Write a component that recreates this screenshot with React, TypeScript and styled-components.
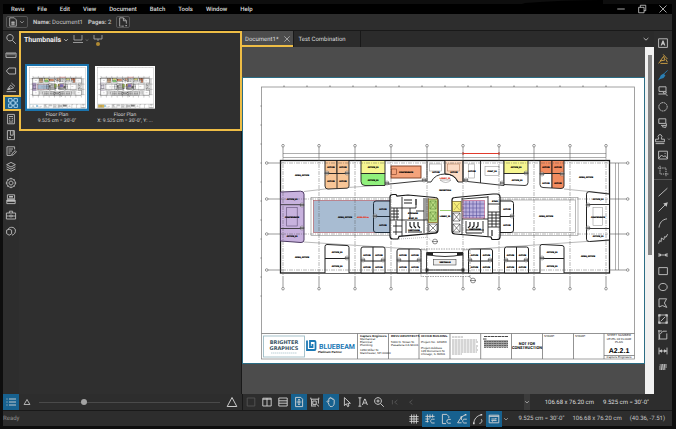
import { createContext, useContext, useState } from "react";
import styled, { createGlobalStyle, css } from "styled-components";

const colors = {
  frame: "#0e0e0e",
  bar: "#2d2d2d",
  canvas: "#4c4c4c",
  line: "#191919",
  text: "#dcdcdc",
  muted: "#8d8d8d",
  blue: "#17618f",
  yellow: "#eebd45",
};

interface GlyphProps {
  d: string;
  fill?: string;
  color?: string;
  size?: number;
  dash?: string;
}

const Glyph: React.FC<GlyphProps> = ({ d, fill, color, size = 12, dash }) => (
  <svg width={size} height={size} viewBox="0 0 12 12" aria-hidden="true">
    <path
      d={d}
      fill="none"
      stroke={color ?? "currentColor"}
      strokeWidth={0.9}
      strokeDasharray={dash}
    />
    {fill && <path d={fill} fill={color ?? "currentColor"} />}
  </svg>
);

const chevron = "M3.2 4.8L6 7.4L8.8 4.8";

const panels: (GlyphProps & { name: string })[] = [
  { name: "Search", d: "M5 1.5a3.2 3.2 0 1 0 .01 0M7.3 7.3L10.8 10.8" },
  { name: "Measurements", d: "M1 4h10v4.4H1zM3 4v2.4M5 4v2.4M7 4v2.4M9 4v2.4" },
  { name: "Properties", d: "M4 3h6.6v6H4L1.4 6z" },
  {
    name: "Signatures",
    d: "M1.5 10.6h9.5M2.4 8.6l3.2-4.4 3 2.6-3.4 1.4zM6.4 2l3.6 3.4M3 8.4l2.6-1.6",
  },
  {
    name: "Thumbnails",
    d: "M1.6 1.6h3.4v3.4H1.6zM7 1.6h3.4v3.4H7zM1.6 7h3.4v3.4H1.6zM7 7h3.4v3.4H7zM5 3.3h2M5 8.7h2M3.3 5v2M8.7 5v2",
  },
  {
    name: "Forms",
    d: "M2.6 1.4h6.8v9.4H2.6zM4 3.5h4M4 5.4h1.4M6.6 5.4h1.4M4 7.2h1.4M6.6 7.2h1.4M4 9h4",
  },
  { name: "Bookmarks", d: "M2.4 1.6h7v9h-7zM5.4 1.6v4.6h2.8V1.6M4 8.6h2" },
  {
    name: "Markups",
    d: "M9.6 4.4V1.8H2v8.6h4M3.4 4h4.6M3.4 6h3.6M3.4 8h2M6.6 10.4l.4-1.8 3.2-3 1.2 1.2-3 3z",
  },
  {
    name: "Layers",
    d: "M6 1.4l4.4 2.3L6 6 1.6 3.7zM1.6 5.8L6 8.1l4.4-2.3M1.6 8L6 10.3 10.4 8",
  },
  {
    name: "Settings",
    d: "M6 1.7a4.3 4.3 0 1 0 .01 0M6 4a2 2 0 1 0 .01 0M6 .8v1.4M6 9.8v1.4M.8 6h1.4M9.8 6h1.4M2.4 2.4l1 1M8.6 8.6l1 1M2.4 9.6l1-1M8.6 3.4l1-1",
  },
  {
    name: "Sets",
    d: "M2.4 1.8h7.2v4H2.4zM1.8 7h8.4v3.6H1.8z",
    fill: "M2 6.4h8v2.4H2zM4 3h4v1.4H4z",
  },
  {
    name: "Tool Chest",
    d: "M1.4 4h9.2v6H1.4zM4.4 4V2.2h3.2V4M1.4 7h3.4M7.2 7h3.4M4.8 6.2h2.4v1.6H4.8z",
  },
  {
    name: "Studio",
    d: "M3 4.4C4 1.6 9.6 1.4 10.4 5c.4 2.4-1 4.6-3.4 5.2M1.6 5.2l2.6-1 2.4 1v3.6l-2.4 1.4-2.6-1.6z",
  },
];

const tools: (GlyphProps & { name: string; menu?: boolean })[] = [
  {
    name: "Text Box",
    d: "M1.6 1.8h8.8v8.6H1.6z",
    fill: "M5.5 3.6h1l1.9 5H7.2l-.4-1H5.2l-.4 1H3.6z",
  },
  {
    name: "Highlight",
    color: "#d6a645",
    d: "M6.2 1.4L10.4 6M6.6 3.4L3.2 8l4.8-1zM1.6 10.4L4 7.4M3.4 10.4h7.2M9 6.4l1.4 2.8",
  },
  {
    name: "Pen",
    color: "#2a7fb4",
    d: "M10.6 1.4L6.6 5.2M1.4 10.8l3-2.6",
    fill: "M1.8 10.4l2-4.2 2.8-1.6 1.8 2-1.8 2.4z",
  },
  { name: "Typewriter", d: "M2 1.8h7v4.6H2zM1.4 9h7M6.4 7v1.2h2.8V6.6M8.6 9.6l2 .8" },
  { name: "Cloud", d: "M6 1.6a4.2 4.2 0 1 0 .01 0", dash: "1.8 .5" },
  { name: "Callout", d: "M1.8 1.8h7v4.6h-7zM4 8.4h5.4v-2M5 9.6l3.6 1L9.4 8.4" },
  {
    name: "Stamp",
    menu: true,
    d: "M4.6 6.2V4.8a1.9 1.9 0 1 1 2.8 0v1.4h3v2.6H1.6V6.2zM1.6 10.6h8.8",
  },
  { name: "Image", d: "M1.6 2.2h8.8v7.8H1.6zM2 9l2.6-3 2 2 1.4-1.4L10 9M7.6 4.4h1" },
  { name: "Crop", d: "M3 .8V9h8.4M.8 3h8.2v8.2", dash: "1.4 .8" },
  { name: "Line", d: "M1.6 10.2L10.4 2.2" },
  { name: "Arrow", d: "M1.6 10.4L8 4", fill: "M10.8 1.2L9.6 5.8 6.2 2.4z" },
  { name: "Arc", d: "M2 10.6C2.4 6 5 2.6 10 1.8" },
  { name: "Polyline", d: "M1.6 10.6l1-3 1.6 1L4.4 5l2.4 1.6L7.6 3.6l1.4.6 1.6-3" },
  { name: "Dimension", d: "M2 4v4M10 4v4M2 6h8", fill: "M2 6l2-1.4v2.8zM10 6L8 4.6v2.8z" },
  { name: "Rectangle", d: "M1.8 2.6h8.6v7H1.8z" },
  { name: "Ellipse", d: "M6 2.4c5.6 0 5.6 7.2 0 7.2s-5.6-7.2 0-7.2" },
  { name: "Polygon", d: "M2 1.8h7.6L7.4 6l2.4 4.4L5.4 8.6 2 10z" },
  {
    name: "Area",
    d: "M2 2h8v8H2zM4 8l4-4",
    fill: "M1.2 1.2h2.4v2.4H1.2zM8.4 1.2h2.4v2.4H8.4zM1.2 8.4h2.4v2.4H1.2zM8.4 8.4h2.4v2.4H8.4z",
  },
  { name: "Volume", d: "M2.6 10V5.6l3.4-3.4h3.8M9.8 4.4V10H2.6M1 2h4M2 1v10" },
  { name: "Length", d: "M2 2.6v6.8M10 2.6v6.8M2 6h8", fill: "M2 6l3-1.8v3.6zM10 6L7 4.2v3.6z" },
  { name: "Count", d: "M2.6 4h7.4M2 6h8M2 8h6.6M4.4 9l1-6M6.8 9l1-6" },
];

const views: (GlyphProps & { name: string; active?: boolean; dim?: boolean })[] = [
  { name: "Unsplit", dim: true, d: "M2.2 2h7.6v8H2.2z" },
  { name: "Split Vertical", d: "M1.8 2.2h8.4v7.8H1.8zM6 2.2V10M1.8 3.2h8.4" },
  { name: "Split Horizontal", d: "M1.8 2h8.4v8H1.8zM1.8 4.8h8.4M1.8 7.2h8.4" },
  {
    name: "Fit Page",
    active: true,
    d: "M2.6 1.4h5.2l1.8 1.8v7.4h-7zM6 3.2v5.6M3.6 6h4.8M5 4.2l1-1 1 1M5 7.8l1 1 1-1",
  },
  {
    name: "Fit Width",
    d: "M1.8 1.6v1.6h8V1.6M2.6 3.2v6.6M3.8 5h3.4v3.4H3.8zM7.4 8.2l2.6 2.2M2 10h5M9.4 3.2v4.4",
  },
  {
    name: "Pan",
    active: true,
    d: "M3.4 7L2 5.4c.4-1 1.2-.4 1.8.4V2.8c.2-.8 1.2-.8 1.2 0V2c.2-.8 1.2-.8 1.4 0v.8c.2-.8 1.2-.6 1.4 0v1c.4-.8 1.4-.6 1.4.2v3c0 2-1 3.6-3 3.6S4.2 9 3.4 7z",
  },
  { name: "Select", d: "M3.4 1.6v8l2-1.8 1.2 2.8 1.4-.6-1.2-2.7h2.6z" },
  {
    name: "Select Text",
    d: "M1.4 1.8h3M1.4 10.2h3M2.9 1.8v8.4M5.4 9l2.3-6h.4l2.3 6M6.2 7h3.4",
  },
  { name: "Zoom", d: "M5 1.6a3.4 3.4 0 1 0 .01 0M7.5 7.5l3.3 3.3M5 3.4v3.2M3.4 5h3.2" },
  { name: "First Page", dim: true, d: "M3.4 4v4.4M8.4 4L5.6 6.2l2.8 2.2" },
  { name: "Previous Page", dim: true, d: "M7.4 4L4.6 6.2l2.8 2.2" },
];

const snaps: (GlyphProps & { name: string; active?: boolean })[] = [
  {
    name: "Grid",
    d: "M3.6 1.4v9.2M6 1.4v9.2M8.4 1.4v9.2M1.4 3.6h9.2M1.4 6h9.2M1.4 8.4h9.2",
  },
  {
    name: "Snap to Grid",
    active: true,
    d: "M3.4 1.4v8M6 1.4v4M8.6 1.4v3.2M1.4 3.4h9.2M1.4 6h4.2M1.4 8.6h3.2M10.6 6.2H8.2c-2 0-2 3.8 0 3.8h2.4",
  },
  {
    name: "Snap to Content",
    active: true,
    d: "M6 10.6H2.4V1.4h4.4l2 2v1.8M10.8 6.4H8.2c-1.8 0-1.8 3.8 0 3.8h2.6",
  },
  {
    name: "Snap to Markup",
    active: true,
    d: "M1.6 9.8L5.4 4l4-2.2M1.6 9.8h4M5.4 4v3M10.8 6.2H8.2c-2 0-2 3.8 0 3.8h2.6",
    fill: "M4.6 3.2h1.6v1.6H4.6zM8.8 1h1.6v1.6H8.8z",
  },
  {
    name: "Reuse",
    d: "M1.8 10.4C2 6 5 2.6 9.4 1.8M7.4 10.4c2.6-.2 3.2-3 1.6-4.4",
    fill: "M1 9.6h1.6v1.6H1zM8.6 1h1.6v1.6H8.6z",
  },
  {
    name: "Sync",
    active: true,
    d: "M1.2 2.2h9.6v7.6H1.2zM1.2 3.4h9.6M3.4 6h5l-1-1M8.6 7.6h-5l1 1",
  },
];

/* ---------- drawing ---------- */

// thumbnails are too small for lettering, so their labels become plain strokes
const MiniContext = createContext(false);

const gridX = [283, 319, 355, 391, 427, 463, 499, 534, 570, 606];
const gridY = [163, 199, 234, 270];

interface LabelProps {
  x: number;
  y: number;
  kind?: string;
  children: string;
}

const Label: React.FC<LabelProps> = ({ x, y, kind = "label", children }) => {
  const mini = useContext(MiniContext);

  if (!mini) {
    return (
      <text x={x} y={y} className={kind}>
        {children}
      </text>
    );
  }

  const centered = !kind.startsWith("note") || kind.includes("center");
  const width = children.length * 1.2;
  return <path d={`M${centered ? x - width / 2 : x} ${y - 1}h${width}`} stroke="#777" />;
};

interface RoomProps {
  x: number;
  y: number;
  w: number;
  h: number;
  fill?: string;
  label?: string;
  stroke?: string;
}

const Room: React.FC<RoomProps> = ({ x, y, w, h, fill = "#fff", label = "OFFICE_00", stroke = "#1c1c1c" }) => (
  <>
    <rect x={x} y={y} width={w} height={h} fill={fill} stroke={stroke} strokeWidth={0.9} />
    <Label x={x + w / 2} y={y + h / 2 + 1}>
      {label}
    </Label>
  </>
);

interface FloorPlanProps {
  mini?: boolean;
  revised?: boolean;
}

const FloorPlan: React.FC<FloorPlanProps> = ({ mini = false, revised = false }) => {
  const purple = revised ? "#fff" : "#c8b2de";
  const water = revised ? "#fff" : "#a8bcd2";

  return (
    <MiniContext.Provider value={mini}>
      <PlanSvg viewBox="243 78 401 285" role="img" aria-label="Floor Plan" $mini={mini}>
        <rect x="243" y="78" width="401" height="285" fill="#fff" />
        <rect x="261.5" y="87" width="373" height="272" fill="none" stroke="#8a8a8a" strokeWidth="0.8" />
        {[0, 1, 2, 3, 4, 5, 6, 7, 8, 9, 10, 11, 12, 13, 14].map((i) => (
          <path key={i} d={`M${284 + i * 23} 85.5v1.5`} stroke="#555" strokeWidth="0.8" />
        ))}
        {[0, 1, 2, 3, 4, 5, 6, 7, 8, 9, 10].map((i) => (
          <path key={i} d={`M260.5 ${106 + i * 19}h1`} stroke="#555" strokeWidth="0.8" />
        ))}

        <rect x="280.5" y="160.5" width="329" height="112.5" fill="#fff" stroke="#151515" strokeWidth="1.3" />
        <path d="M283 153.5h323M283 157.5h323M615.5 163v107M618.5 163v107" stroke="#777" strokeWidth="0.6" />
        <path d="M463 153.5h36M463 152v3M499 152v3" stroke="#e03a2c" strokeWidth="1" />
        <g fill="none" stroke="#8a8a8a" strokeWidth="0.6">
          <path d="M304 191.5L325 189l60-4M564 189l45 4.5M304 242l123 8M463 250l123-8.5l23-1" />
          <rect x="311" y="197.5" width="80" height="38" />
          <rect x="500" y="197.5" width="78" height="38" />
          <rect x="500" y="200" width="75.5" height="32.5" />
        </g>

        <Room x={325} y={160.5} w={12} h={13} fill="#f8c697" label="OFFICE" />
        <Room x={337} y={160.5} w={12} h={13} fill="#f8c697" label="OFFICE" />
        <path
          d="M325 173.5h24v12.5q0 2-2 2.2l-19 .8q-3 0-3-3zM337 173.5v15"
          fill="#f8c697"
          stroke="#222"
          strokeWidth="0.9"
        />
        <Label x={331} y={182}>OFFICE</Label>
        <Label x={343} y={182}>OFFICE</Label>

        <Room x={361} y={160.5} w={24} h={13} fill="#f6f690" />
        <path d="M361 173.5h24v12h-20q-4 0-4-4z" fill="#90f07c" stroke="#222" strokeWidth="0.9" />
        <Label x={373} y={180.5}>OFFICE_00</Label>
        <Room x={391} y={166} w={30} h={12} fill="#f4a37b" stroke="#7b3a20" label="CONFERENCE" />
        <rect x="391.5" y="169" width="5" height="5.5" fill="none" stroke="#7b3a20" strokeWidth="0.6" />

        <path d="M385 184.5l34-3.5h8v-20.5M445 160.5v13" fill="none" stroke="#222" strokeWidth="0.9" />
        <path d="M445 160.5h18V182h-5q-4-8-13-8z" fill="#fbdcc6" stroke="#222" strokeWidth="0.9" />
        <path d="M427 182h4q4-8 14-8q10 0 13 8" fill="none" stroke="#222" strokeWidth="0.9" />
        <rect x="429.5" y="164" width="12" height="7" fill="none" stroke="#888" strokeWidth="0.5" />
        <rect x="447.5" y="164" width="12" height="7" fill="none" stroke="#a86b48" strokeWidth="0.5" />
        <path d="M440 180h11q-5 5-11 0" fill="none" stroke="#777" strokeWidth="0.5" />
        <Label x={436} y={173}>OFFICE</Label>
        <Label x={454} y={173}>OFFICE</Label>
        <Label x={445} y={179} kind="label red">LOBBY_00</Label>
        <Label x={445} y={191}>RECEPTION</Label>

        <path d="M463 160.5V181l41 4.5v-25M480.5 160.5V183" fill="none" stroke="#222" strokeWidth="0.9" />
        <rect x="468.5" y="164" width="6" height="14" fill="none" stroke="#888" strokeWidth="0.5" />
        <rect x="485" y="166.5" width="14" height="9" fill="none" stroke="#888" strokeWidth="0.5" />
        <Label x={472} y={172}>OFFICE</Label>
        <Label x={492} y={172}>CONF_00</Label>
        <Room x={504} y={160.5} w={24} h={13} fill="#f6f690" />
        <path d="M504 173.5h24v9q0 3-3 3l-21-1z" fill="#fff" stroke="#222" strokeWidth="0.9" />
        <Label x={517} y={180.5}>OFFICE_00</Label>

        <Room x={540} y={160.5} w={12} h={13} fill="#f28c60" label="OFFICE" />
        <Room x={552} y={160.5} w={12} h={13} fill="#f28c60" label="OFFICE" />
        <path d="M540 173.5h12v14.5l-9-.5q-3 0-3-3z" fill="#fff" stroke="#222" strokeWidth="0.9" />
        <path d="M552 173.5h12V186q0 2.5-3 2.5l-9-.5z" fill="#f28c60" stroke="#222" strokeWidth="0.9" />
        <Label x={546} y={183.5}>OFFICE</Label>
        <Label x={558} y={183.5}>OFFICE</Label>

        <path
          d="M280.5 192l20-.8q3.5 0 3.5 3V240q0 2.5-3 2.5l-20.5-1.5z"
          fill={purple}
          stroke="#4d3a63"
          strokeWidth="1"
        />
        <path d="M280.5 204.7H304M280.5 228.5H304" stroke="#333" strokeWidth="0.9" />
        <rect x="286.7" y="207.5" width="10.5" height="18.5" fill="none" stroke="#5f4f75" strokeWidth="0.6" />
        <Label x={292} y={199.5}>OFFICE_00</Label>
        <Label x={292} y={218}>CONFERENCE</Label>
        <Label x={292} y={236.5}>OFFICE_00</Label>

        <path
          d="M609 194l-20-2.3q-2.5 0-2.5 2.5v45q0 2.5 3 2.3l19.5-1.5"
          fill="#fff"
          stroke="#222"
          strokeWidth="1"
        />
        <path d="M586.5 204.5H609M586.5 228.5H609" stroke="#222" strokeWidth="0.9" />
        <rect x="593" y="207.5" width="9.5" height="18" fill="none" stroke="#888" strokeWidth="0.5" />
        <Label x={598} y={199.5}>OFFICE_00</Label>
        <Label x={598} y={218}>CONFERENCE</Label>
        <Label x={598} y={236.5}>OFFICE_00</Label>

        <rect
          x="313.5"
          y="200.5"
          width="77"
          height="32"
          fill={water}
          stroke={revised ? "#888" : "#b0606a"}
          strokeWidth="0.7"
        />
        <path
          d="M391 201h-15q-2.5 0-2.5 2.5V230q0 2.5 2.5 2.5h15M373.5 216.5H391"
          fill="none"
          stroke="#1f2c3a"
          strokeWidth="1"
        />
        <Label x={345} y={218}>OPEN_OFFICE</Label>
        <Label x={363} y={218} kind="label red">AREA 200 m</Label>
        <Label x={383} y={209.5}>OFFICE</Label>
        <Label x={383} y={225.5}>OFFICE</Label>
        <path
          d="M500 201h11q2.5 0 2.5 2.5V230q0 2.5-2.5 2.5h-11M500 216.5h13.5"
          fill="none"
          stroke="#222"
          strokeWidth="1"
        />
        <Label x={507} y={209.5}>OFFICE</Label>
        <Label x={507} y={225.5}>OFFICE</Label>
        <Label x={546} y={216.5}>OPEN_OFFICE</Label>

        {/* service cores */}
        <g fill="#fff" stroke="#161616" strokeWidth="1.2">
          <path d="M390 197q0-2.5 3-2.5h3l1 1.5 11-1 27 2.5q3 0 3 3V230q0 3-3 3.2l-36 3.2-1 2.6h-5q-3 0-3-3z" />
          <path d="M452 200q0-2.5 3-2.5l38-3.5h4q3 0 3 3v40q0 2.5-3 2.5h-5l-1-2.5-36-3q-3 0-3-3z" />
        </g>
        <g fill="none" stroke="#222" strokeWidth="0.9">
          <path d="M402 197v39M390 220h38M424 198v35M402 208h14v-9M410 208v10M416 211h8M416 199v6M391 208h11M394 208v12M397 208v12M391 211h8M391 214h8M391 217h8M406 221v12M393 226h9M393 232h9M428 198v36M426 198v22M396 221v14" />
          <path d="M488 196v40M462 219h26M462 198v36M488 212h12M488 227h12M492 212v15M496 212v15M488 215h12M488 218h12M488 221h12M488 224h12M466 221v12M466 230h18M483 221v12M488 204h12M484 219v-4M462 199l26-2" />
          <path
            d="M410 222v4l2 2M414 222v4l2 2M418 222v4l2 2M470 222v4l-2 2M474 222v4l-2 2M478 222v4l-2 2M404 200h8M404 203h8M492 230v6M408 232h14M466 233h16"
            strokeWidth="1.2"
          />
        </g>
        <Label x={413} y={214}>STORAGE</Label>
        <Label x={413} y={219}>ELEC_00</Label>
        <Label x={414} y={231}>RESTROOM</Label>
        <Label x={475} y={230}>RESTROOM</Label>
        <Label x={495} y={202}>STAIR</Label>
        <rect x="428.5" y="199" width="9" height="23.5" fill="#b9dc83" stroke="#8a6a2a" strokeWidth="0.8" />
        <path
          d="M430 201l6 8M436 201l-6 8M430 201h6v8h-6zM430 212l6 8M436 212l-6 8M430 212h6v8h-6z"
          fill="none"
          stroke="#5c8a36"
          strokeWidth="0.6"
        />
        <path
          d="M429 224h8v8h-8zM429 224l8 8M437 224l-8 8M453 213h7v8h-7zM453 213l7 8M460 213l-7 8M453 224h7v8h-7zM453 224l7 8M460 224l-7 8"
          fill="none"
          stroke="#333"
          strokeWidth="0.6"
        />
        <rect x="452.5" y="201.5" width="8.5" height="10" fill="#f7ee7a" stroke="#6a5a20" strokeWidth="0.7" />
        <path d="M454 203l5.5 7M459.5 203l-5.5 7" stroke="#8b8540" strokeWidth="0.5" />
        <path d="M440 210.5h11" stroke="#7fc04a" strokeWidth="0.8" />
        <Label x={445} y={216.5}>LOBBY_00</Label>
        <rect x="463" y="200.5" width="21.5" height="17.5" fill="#b9b0dc" stroke="#c0537c" strokeWidth="0.6" />
        <path
          d="M466 201v17M469.5 201v17M473 201v17M476.5 201v17M480 201v17M463 204h21.5M463 208h21.5M463 212h21.5M463 215.5h21.5"
          stroke="#5a54a0"
          strokeWidth="0.6"
        />
        <path
          d="M391 239.5l33-2q4-.5 6 2l2 2"
          fill="none"
          stroke="#777"
          strokeWidth="0.5"
          strokeDasharray="1 1"
        />

        {/* south rooms */}
        {[
          { x: 361, top: 247 },
          { x: 397, top: 249 },
          { x: 468.5, top: 249 },
          { x: 504.5, top: 247 },
        ].map(({ x, top }) => (
          <g key={x}>
            <path
              d={`M${x} 273V${top + 2}q0-2 2-2h20q2 0 2 2V273zM${x + 12} ${top}V273M${x} 261h24`}
              fill="#fff"
              stroke="#222"
              strokeWidth="1"
            />
            <Label x={x + 6} y={256}>OFFICE</Label>
            <Label x={x + 18} y={256}>OFFICE</Label>
            <Label x={x + 6} y={268}>OFFICE</Label>
            <Label x={x + 18} y={268}>OFFICE</Label>
          </g>
        ))}
        {[325, 540].map((x) => (
          <g key={x}>
            <path
              d={`M${x} 273V246.5q0-2 2-2l20 1q2 0 2 2V273M${x} 258.5h24`}
              fill="#fff"
              stroke="#222"
              strokeWidth="1"
            />
            <Label x={x + 12} y={253}>OFFICE_00</Label>
            <Label x={x + 12} y={266.5}>OFFICE_00</Label>
          </g>
        ))}
        <path d="M421 249h49v27.5h-49z" fill="none" stroke="#666" strokeWidth="0.6" strokeDasharray="1.5 1" />
        <path
          d="M426.5 273V252.5h36.5V273M427 254.5q18 4 36 0M427 270h36"
          fill="none"
          stroke="#222"
          strokeWidth="0.9"
        />
        <path
          d="M427 252.5h6v3h-6zM457 252.5h6v3h-6zM425.5 268.5h3v3h-3zM461.5 268.5h3v3h-3z"
          fill="#222"
        />
        <rect x="433.5" y="259.5" width="22.5" height="5.5" fill="#eee" stroke="#444" strokeWidth="0.6" />
        <Label x={445} y={263}>VESTIBULE</Label>
        <Label x={302} y={176}>OPEN_OFFICE</Label>
        <Label x={302} y={258}>OPEN_OFFICE</Label>
        <Label x={586} y={178}>OPEN_OFFICE</Label>
        <Label x={588} y={257}>OPEN_OFFICE</Label>

        {/* door swings */}
        {[
          [327, 173], [347, 173], [387, 183], [424, 180], [526, 173], [542, 174], [562, 174], [302, 205], [302, 228],
          [588, 205], [588, 228], [347, 258], [542, 258], [363, 260], [383, 260], [399, 260], [419, 260], [470, 260],
          [490, 260], [506, 260], [526, 260], [375, 216], [512, 216], [466, 180], [502, 183],
        ].map(([x, y]) => (
          <g key={`${x}-${y}`}>
            <circle cx={x} cy={y} r="2" fill="#fff" fillOpacity="0.6" stroke="#555" strokeWidth="0.5" />
            <path d={`M${x - 2} ${y}h4`} stroke="#222" strokeWidth="1" />
          </g>
        ))}

        {/* column grid */}
        {gridX.map((x) => (
          <g key={x} stroke="#555" strokeWidth="0.6">
            <path d={`M${x} 147v10M${x} 276v11`} />
            <path d={`M${x} 157V276`} strokeDasharray="4 1 1 1" strokeOpacity="0.7" />
            <circle cx={x} cy="145.7" r="1.3" fill="#fff" />
            <circle cx={x} cy="288.7" r="1.3" fill="#fff" />
          </g>
        ))}
        {gridY.map((y) => (
          <g key={y} stroke="#555" strokeWidth="0.6" fill="#fff">
            <path d={`M268 ${y}h14M609 ${y}h17`} />
            <path
              d={y === 199 || y === 234 ? `M282 ${y}h108M500 ${y}h108` : `M282 ${y}h326`}
              strokeDasharray="4 1 1 1"
              strokeOpacity="0.7"
            />
            <circle cx="266.7" cy={y} r="1.3" />
            <circle cx="627.7" cy={y} r="1.3" />
          </g>
        ))}
        <g fill="#fff" stroke="#444" strokeWidth="0.6">
          <circle cx="435" cy="241.5" r="2.4" />
          <circle cx="473" cy="280.5" r="2.4" />
          <path d="M432 241.5h6M469 276l2 2.5M470 280.5h6" />
        </g>

        {/* title block */}
        <path
          d="M261.5 333.5h373M357.5 333.5V359M388.5 333.5V359M419 333.5V359M450 333.5V359M480.7 333.5V359M511.5 333.5V359M542.5 333.5V359M573.5 333.5V359M604 333.5V359M604 355.5h30.5"
          fill="none"
          stroke="#777"
          strokeWidth="0.8"
        />
        <rect
          x="263.5"
          y="336"
          width="41"
          height="21"
          fill={revised ? "#d8b04a" : "#fff"}
          stroke="#9dbcc6"
          strokeWidth="0.9"
        />
        <Label x={284} y={344} kind="brighter">BRIGHTER</Label>
        <Label x={284} y={350} kind="brighter">GRAPHICS</Label>
        <path d="M271 353h26" stroke="#9dbcc6" strokeWidth="0.7" strokeDasharray="1.5 .5" />
        <path
          d="M307 340.5v9.5h7.5q1 0 1-1v-7q0-1-1-1h-4.5v6h2.5v-3"
          fill="none"
          stroke="#1c79b5"
          strokeWidth="1.8"
        />
        <Label x={337} y={349} kind="bluebeam">BLUEBEAM</Label>
        <Label x={318} y={353} kind="note strong">Platinum Partner</Label>
        <Label x={360} y={337} kind="note strong">Capture Engineers</Label>
        <Label x={360} y={340} kind="note">Mechanical</Label>
        <Label x={360} y={343} kind="note">Electrical</Label>
        <Label x={360} y={346} kind="note">Plumbing</Label>
        <Label x={360} y={351} kind="note">1234 Miller St</Label>
        <Label x={360} y={354} kind="note">Manchester, NH 00000</Label>
        <Label x={391} y={337} kind="note strong">REVU ARCHITECTS</Label>
        <Label x={391} y={343} kind="note">5000 N. Street St</Label>
        <Label x={391} y={346} kind="note">Pasadena CA 91101</Label>
        <Label x={421} y={337} kind="note strong">OFFICE BUILDING</Label>
        <Label x={421} y={343} kind="note">Project No. 123456</Label>
        <Label x={421} y={349} kind="note">Project Address</Label>
        <Label x={421} y={352} kind="note">123 Monument St</Label>
        <Label x={421} y={355} kind="note">Chicago, IL 60601</Label>
        <path
          d="M452 337h11M452 340h25M452 342h26M452 344h24M452 346h26M452 348h25M452 350h26M452 352h25M452 354h10"
          stroke="#888"
          strokeWidth="0.7"
          strokeDasharray="2.5 .5"
        />
        <path d="M484 336.5h24M483 339h4" stroke="#333" strokeWidth="0.9" strokeDasharray="3 .5" />
        <path d="M484 340h24v7h-24z" fill="#aaa" />
        <path
          d="M484 341.5h24M484 343.5h24M484 345.5h24M484 347.5h24"
          stroke="#444"
          strokeWidth="0.7"
          strokeDasharray="2 .5"
        />
        <Label x={527} y={345} kind="stamp">NOT FOR</Label>
        <Label x={527} y={349} kind="stamp">CONSTRUCTION</Label>
        <Label x={544} y={337} kind="note">STAMP:</Label>
        <Label x={575} y={337} kind="note">STAMP:</Label>
        <Label x={619} y={336} kind="note center">SHEET NUMBER</Label>
        <Label x={619} y={340} kind="note center">LEVEL 02 FLOOR</Label>
        <Label x={619} y={343} kind="note center">PLAN</Label>
        <Label x={619} y={353} kind="sheet">A2.2.1</Label>
        <Label x={619} y={358} kind="note center">Capture Engineers</Label>
      </PlanSvg>
    </MiniContext.Provider>
  );
};

/* ---------- page ---------- */

export default function App() {
  const [tool, setTool] = useState("Thumbnails");
  const [zoom, setZoom] = useState(24);

  return (
    <>
      <GlobalStyle />
      <Window>
        <Smear viewBox="0 0 90 14" aria-hidden="true">
          <path d="M0 13Q2 5 12 3Q50 0 90 0V12L30 13z" fill="#000" />
        </Smear>
        <MenuBar>
          {["Revu", "File", "Edit", "View", "Document", "Batch", "Tools", "Window", "Help"].map((item) => (
            <button type="button" key={item}>
              {item}
            </button>
          ))}
          <WindowButtons>
            <button type="button" aria-label="Minimize">
              <Glyph size={10} d="M1.5 6h9" />
            </button>
            <button type="button" aria-label="Restore">
              <Glyph size={10} d="M2 4h6.5v6.5H2zM4 4V1.5h6.5V8H8.5" />
            </button>
            <button type="button" aria-label="Close">
              <Glyph size={10} d="M1.8 1.8l8.4 8.4M10.2 1.8l-8.4 8.4" />
            </button>
          </WindowButtons>
        </MenuBar>

        <InfoBar>
          <OutlinedButton type="button" aria-label="Profile">
            <Glyph size={10} d="M2 1h5.5l2.5 2.5V11H2zM4 6.5h4M4 8.5h4M5 5v5M7 5v5" />
            <Glyph size={8} d={chevron} />
          </OutlinedButton>
          <p>
            <b>Name:</b> Document1
          </p>
          <p>
            <b>Pages:</b> 2
          </p>
          <OutlinedButton type="button" aria-label="New page">
            <Glyph size={10} d="M3 11H2V1h4.5l3.5 3.5V8M6.5 1v3.5H10M4 11h3" fill="M9 9.5h1.5V11H9z" />
          </OutlinedButton>
        </InfoBar>

        <Workspace>
          <LeftRail>
            {panels.map(({ name, ...glyph }) => (
              <RailButton
                type="button"
                key={name}
                aria-label={name}
                $selected={tool === name}
                onClick={() => setTool(name)}
              >
                <Glyph {...glyph} />
              </RailButton>
            ))}
          </LeftRail>

          <SidePanel>
            <Highlighted>
              <PanelHeader>
                <PanelTitle type="button">
                  Thumbnails
                  <Glyph size={8} d={chevron} />
                </PanelTitle>
                <button type="button" aria-label="Page options">
                  <Glyph d="M2 1v5h8V1M1 8.5h10" />
                  <Glyph size={6} d={chevron} />
                </button>
                <button type="button" aria-label="Insert page">
                  <Glyph d="M2 1v4h8V1M6 5v2" />
                  <Dot />
                </button>
              </PanelHeader>
              <ThumbList>
                <Thumb>
                  <ThumbImage $selected>
                    <FloorPlan mini />
                  </ThumbImage>
                  <figcaption>
                    Floor Plan
                    <br />
                    9.525 cm = 30'-0"
                  </figcaption>
                </Thumb>
                <Thumb>
                  <ThumbImage>
                    <FloorPlan mini revised />
                  </ThumbImage>
                  <figcaption>
                    Floor Plan
                    <br />
                    X: 9.525 cm = 30'-0", Y: ...
                  </figcaption>
                </Thumb>
              </ThumbList>
            </Highlighted>
          </SidePanel>

          <DocumentArea>
            <TabBar>
              <Tab type="button" $active>
                Document1*
                <Glyph size={8} d="M2 2l8 8M10 2l-8 8" />
              </Tab>
              <Tab type="button">Test Combination</Tab>
              <TabMenu type="button" aria-label="Tab list">
                <Glyph size={10} d={chevron} />
              </TabMenu>
            </TabBar>
            <Canvas>
              <Page>
                <FloorPlan />
              </Page>
              <ScrollTrack>
                <ScrollThumb />
              </ScrollTrack>
            </Canvas>
          </DocumentArea>

          <RightRail>
            {tools.map(({ name, menu, ...glyph }) => (
              <ToolButton type="button" key={name} aria-label={name} $divided={name === "Line"}>
                <Glyph {...glyph} />
                {menu && <Glyph size={6} d={chevron} />}
              </ToolButton>
            ))}
          </RightRail>
        </Workspace>

        <ViewBar>
          <ThumbZoom>
            <IconButton type="button" $active aria-label="List view">
              <Glyph d="M4 3h7M4 6h7M4 9h7M1.5 3h1M1.5 6h1M1.5 9h1" />
            </IconButton>
            <Glyph size={10} d="M6 3l3.5 6h-7z" />
            <ZoomSlider
              type="range"
              aria-label="Thumbnail size"
              value={zoom}
              onChange={(e) => setZoom(Number(e.target.value))}
            />
            <Glyph d="M6 1.5l4.8 9H1.2z" />
          </ThumbZoom>
          {views.map(({ name, active, dim, ...glyph }) => (
            <IconButton type="button" key={name} aria-label={name} $active={active} $dim={dim}>
              <Glyph {...glyph} />
            </IconButton>
          ))}
          <PageMenu type="button" aria-label="Page list">
            <Glyph size={8} d={chevron} />
          </PageMenu>
          <PageInfo>
            <span>106.68 x 76.20 cm</span>
            <span>9.525 cm = 30'-0"</span>
          </PageInfo>
        </ViewBar>

        <StatusBar>
          <Ready>Ready</Ready>
          {snaps.map(({ name, active, ...glyph }) => (
            <IconButton type="button" key={name} aria-label={name} $active={active}>
              <Glyph {...glyph} />
            </IconButton>
          ))}
          <IconButton type="button" aria-label="Sync options" $narrow>
            <Glyph size={8} d={chevron} />
          </IconButton>
          <StatusValues>
            <span>9.525 cm = 30'-0"</span>
            <span>106.68 x 76.20 cm</span>
            <span>(40.36, -7.51)</span>
          </StatusValues>
        </StatusBar>
      </Window>
    </>
  );
}

const GlobalStyle = createGlobalStyle`
  * {
    box-sizing: border-box;
    margin: 0;
  }
  body {
    background-color: ${colors.frame};
    color: ${colors.text};
    font-family: Roboto, "Liberation Sans", sans-serif;
    font-size: 6px;
    line-height: 7px;
    text-rendering: geometricPrecision;
  }
  button {
    display: flex;
    align-items: center;
    justify-content: center;
    flex-shrink: 0;
    padding: 0;
    border: none;
    background: none;
    color: inherit;
    font: inherit;
    text-rendering: inherit;
  }
  svg {
    display: block;
    flex-shrink: 0;
  }
`;

const Window = styled.div`
  position: relative;
  display: flex;
  flex-direction: column;
  min-height: 100vh;
  padding: 4px 4px 3px 3px;
`;

const Smear = styled.svg`
  position: absolute;
  top: 0;
  right: 73px;
  width: 90px;
`;

const MenuBar = styled.nav`
  display: flex;
  align-items: center;
  gap: 13px;
  height: 10px;
  padding: 0 4px 0 8px;
  background-color: #000;
  font-weight: 500;
`;

const WindowButtons = styled.div`
  display: flex;
  gap: 11px;
  margin-left: auto;
`;

const InfoBar = styled.div`
  display: flex;
  align-items: center;
  gap: 5px;
  height: 16px;
  padding-left: 3px;
  background-color: ${colors.bar};
  color: #c6c6c6;
`;

const OutlinedButton = styled.button`
  height: 12px;
  padding: 0 1px;
  border: 1px solid #555;
  border-radius: 2px;
`;

const Workspace = styled.div`
  display: flex;
  flex: 1;
  border-top: 1px solid ${colors.line};
`;

const LeftRail = styled.div`
  width: 16px;
  background-color: ${colors.bar};
`;

const RailButton = styled.button<{ $selected?: boolean }>`
  width: 16px;
  height: 16px;
  color: #bdbdbd;

  ${({ $selected }) =>
    $selected &&
    css`
      width: 18px;
      position: relative;
      background-color: ${colors.blue};
      border: 2px solid ${colors.yellow};
      border-right: none;
      color: #a9d4ee;
    `}
`;

const SidePanel = styled.aside`
  width: 223px;
  flex-shrink: 0;
  background-color: #2f2f2f;
  border-right: 1px solid ${colors.line};
`;

const Highlighted = styled.section`
  height: 100px;
  width: 223px;
  border: 2px solid ${colors.yellow};
`;

const PanelHeader = styled.header`
  display: flex;
  align-items: center;
  gap: 2px;
  height: 14px;
  padding-left: 3px;
  color: #a5a5a5;
`;

const PanelTitle = styled.button`
  gap: 1px;
  color: #f0f0f0;
  font-size: 7px;
  font-weight: 700;
`;

const Dot = styled.i`
  width: 4px;
  height: 4px;
  margin: 8px 0 0 -8px;
  border-radius: 50%;
  background-color: #b08a32;
`;

const ThumbList = styled.div`
  display: flex;
  gap: 4px;
  padding: 17px 0 0 4px;
`;

const Thumb = styled.figure`
  width: 64px;
  text-align: center;

  figcaption {
    margin-top: 1px;
    line-height: 6px;
    white-space: nowrap;
    font-size: 5px;
  }
`;

const ThumbImage = styled.div<{ $selected?: boolean }>`
  padding: 2px;
  background-color: ${({ $selected }) => ($selected ? "#1b74ad" : "transparent")};
`;

const DocumentArea = styled.main`
  display: flex;
  flex: 1;
  flex-direction: column;
  min-width: 0;
`;

const TabBar = styled.div`
  display: flex;
  height: 16px;
  background-color: #2b2b2b;
`;

const Tab = styled.button<{ $active?: boolean }>`
  gap: 5px;
  padding: 0 14px 0 4px;
  border-right: 1px solid ${colors.line};

  ${({ $active }) =>
    $active &&
    css`
      padding: 0 2px 0 3px;
      background-color: ${colors.canvas};
      box-shadow: inset 0 -2px ${colors.yellow};
    `}
`;

const TabMenu = styled.button`
  width: 16px;
  margin-left: auto;
`;

const Canvas = styled.div`
  display: flex;
  flex: 1;
  align-items: center;
  background-color: ${colors.canvas};
`;

const Page = styled.div`
  flex: 1;
  border: 1px solid #2b6d84;
`;

const PlanSvg = styled.svg<{ $mini: boolean }>`
  width: 100%;
  height: auto;

  ${({ $mini }) =>
    $mini &&
    css`
      path,
      rect {
        stroke-width: 2px;
      }
    `}

  text {
    font-family: "Liberation Sans", sans-serif;
  }
  .label {
    font-size: 2px;
    font-weight: 700;
    text-anchor: middle;
    fill: #000;
    stroke: #000;
    stroke-width: 0.2px;
  }
  .red {
    fill: #e0402e;
    stroke: #e0402e;
  }
  .note {
    font-size: 3px;
    fill: #222;
  }
  .strong {
    font-weight: 700;
    fill: #000;
  }
  .center {
    text-anchor: middle;
  }
  .stamp {
    font-family: Roboto, sans-serif;
    font-size: 4px;
    font-weight: 700;
    text-anchor: middle;
  }
  .sheet {
    font-size: 7px;
    font-weight: 700;
    text-anchor: middle;
  }
  .brighter {
    font-family: "DejaVu Sans", sans-serif;
    font-size: 5px;
    font-weight: 700;
    text-anchor: middle;
    fill: #3c5564;
  }
  .bluebeam {
    font-family: Roboto, sans-serif;
    font-size: 7px;
    font-weight: 700;
    text-anchor: middle;
    fill: #1c79b5;
  }
`;

const ScrollTrack = styled.div`
  align-self: stretch;
  width: 9px;
  padding: 8px 2px 0 3px;
  background-color: #f1f1f1;
`;

const ScrollThumb = styled.div`
  height: 59%;
  background-color: #858585;
`;

const RightRail = styled.div`
  width: 18px;
  padding-top: 4px;
  background-color: ${colors.bar};
`;

const ToolButton = styled.button<{ $divided?: boolean }>`
  width: 18px;
  height: 16px;
  color: #c4c4c4;

  ${({ $divided }) =>
    $divided &&
    css`
      height: 20px;
      padding-top: 4px;
      border-top: 1px solid #555;
    `}
`;

const ViewBar = styled.div`
  display: flex;
  align-items: center;
  height: 17px;
  background-color: ${colors.bar};
  border-bottom: 1px solid ${colors.line};
`;

const ThumbZoom = styled.div`
  display: flex;
  align-items: center;
  gap: 3px;
  width: 240px;
  height: 16px;
  padding-right: 4px;
  border-right: 1px solid ${colors.line};
`;

const ZoomSlider = styled.input`
  appearance: none;
  flex: 1;
  min-width: 0;
  height: 6px;
  margin: 0 3px 0 4px;
  background: linear-gradient(#4a4a4a, #4a4a4a) center / 100% 1px no-repeat;

  &::-webkit-slider-thumb {
    appearance: none;
    width: 6px;
    height: 6px;
    border-radius: 50%;
    background-color: #a3a3a3;
  }
`;

const IconButton = styled.button<{ $active?: boolean; $dim?: boolean; $narrow?: boolean }>`
  width: ${({ $narrow }) => ($narrow ? "8px" : "16px")};
  height: 16px;
  background-color: ${({ $active }) => ($active ? colors.blue : "transparent")};
  color: ${({ $dim }) => ($dim ? "#555" : "#d5d5d5")};
`;

const PageMenu = styled.button`
  width: 6px;
  height: 16px;
  margin-left: auto;
  background-color: #3b3b3b;
`;

const PageInfo = styled.div`
  display: flex;
  gap: 9px;
  padding: 0 23px 0 15px;
`;

const StatusBar = styled.footer`
  display: flex;
  align-items: center;
  height: 15px;
  background-color: ${colors.bar};
  color: #c6c6c6;
`;

const Ready = styled.span`
  margin-right: auto;
  color: ${colors.muted};
`;

const StatusValues = styled.div`
  display: flex;
  gap: 8px;
  padding: 0 7px 0 8px;
`;
